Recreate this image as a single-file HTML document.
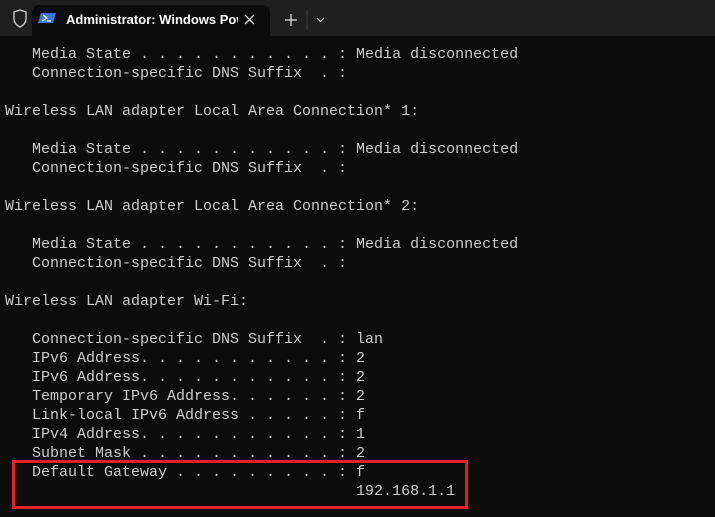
<!DOCTYPE html><html><head><style>
body{margin:0;width:715px;height:517px;background:#0c0c0c;overflow:hidden;position:relative;font-family:"Liberation Sans",sans-serif}
.bar{position:absolute;left:0;top:0;width:715px;height:36px;background:#202020}
.tab{position:absolute;left:32px;top:5px;width:238px;height:31px;background:#0c0c0c;border-radius:7px 7px 0 0}
.t{position:absolute;left:66px;top:12px;color:#fff;font-size:13px;font-weight:bold;white-space:nowrap;width:172px;overflow:hidden}
pre{position:absolute;left:5px;top:45px;margin:0;font-family:"Liberation Mono",monospace;font-size:15px;line-height:19px;color:#cccccc}
.box{position:absolute;left:12px;top:460px;width:450px;height:43px;border:3px solid #e3202a}
</style></head><body>
<div class="bar"></div>
<div class="tab"></div>
<svg style="position:absolute;left:0;top:0" width="715" height="36">
<path d="M14 12 L20 10 L26 12 L26 19 Q26 24 20 27 Q14 24 14 19 Z" fill="none" stroke="#c8c8c8" stroke-width="1.4"/>
<path d="M41 13 h15 l-3 10 h-15 z" fill="#3a78d8"/>
<path d="M43 15 l4 3 l-5 3 M47 21 h4" stroke="#fff" stroke-width="1.2" fill="none"/>
<path d="M245 15 l9 9 M254 15 l-9 9" stroke="#ddd" stroke-width="1.3"/>
<path d="M291 14 v12 M285 20 h12" stroke="#ddd" stroke-width="1.3"/>
<line x1="307" y1="10" x2="307" y2="30" stroke="#3a3a3a"/>
<path d="M317 18 l3.5 3.5 l3.5 -3.5" stroke="#ddd" stroke-width="1.2" fill="none"/>
</svg>
<div class="t">Administrator: Windows PowerShell</div>
<pre>   Media State . . . . . . . . . . . : Media disconnected
   Connection-specific DNS Suffix  . :

Wireless LAN adapter Local Area Connection* 1:

   Media State . . . . . . . . . . . : Media disconnected
   Connection-specific DNS Suffix  . :

Wireless LAN adapter Local Area Connection* 2:

   Media State . . . . . . . . . . . : Media disconnected
   Connection-specific DNS Suffix  . :

Wireless LAN adapter Wi-Fi:

   Connection-specific DNS Suffix  . : lan
   IPv6 Address. . . . . . . . . . . : 2
   IPv6 Address. . . . . . . . . . . : 2
   Temporary IPv6 Address. . . . . . : 2
   Link-local IPv6 Address . . . . . : f
   IPv4 Address. . . . . . . . . . . : 1
   Subnet Mask . . . . . . . . . . . : 2
   Default Gateway . . . . . . . . . : f
                                       192.168.1.1</pre>
<div class="box"></div>
</body></html>
